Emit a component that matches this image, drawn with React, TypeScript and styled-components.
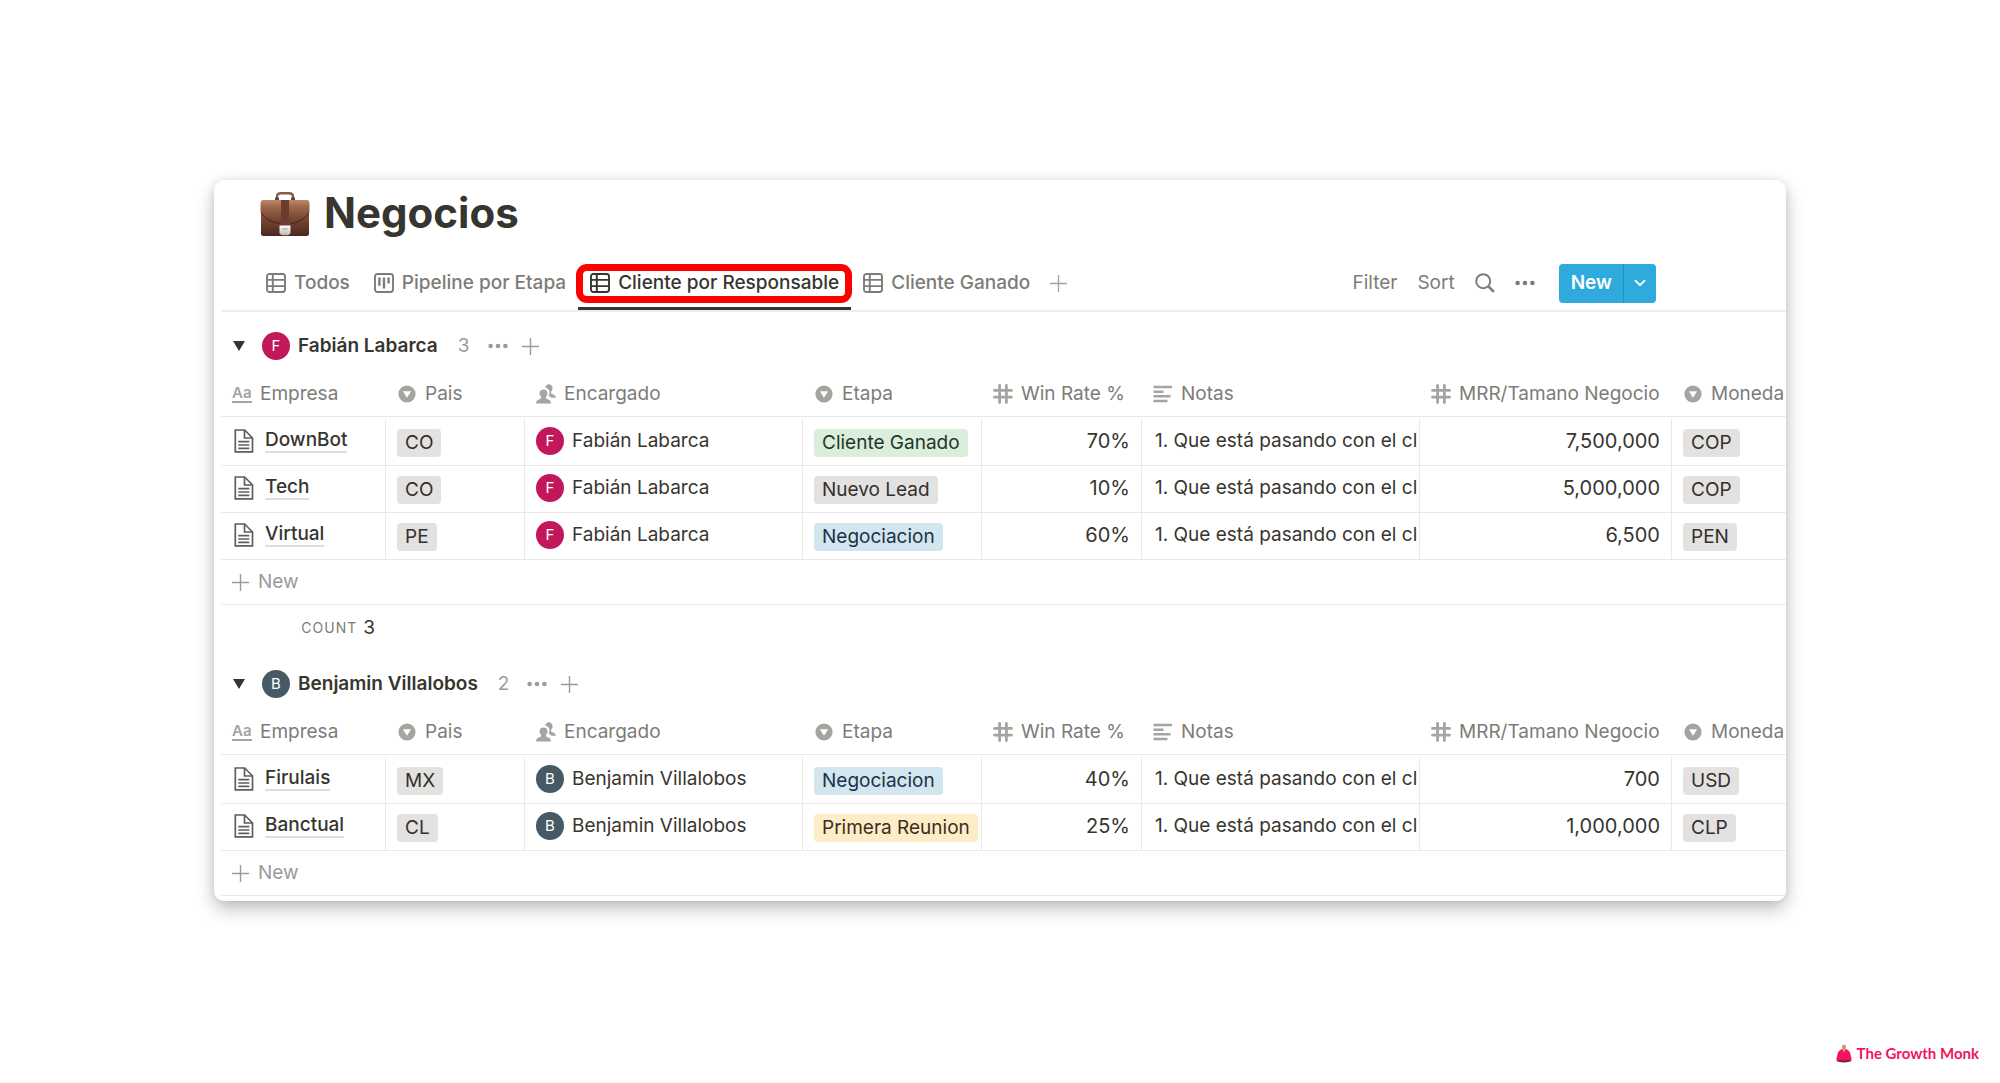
import React from "react";
import styled, { createGlobalStyle } from "styled-components";

const FIRST_COLUMN = 165;

const color = {
  ink: "#37352f",
  muted: "#7d7c78",
  faint: "#9b9a97",
  icon: "#a5a4a1",
  line: "#e9e9e7",
  blue: "#2eaadc",
};

const tones = {
  gray: { bg: "#e3e2e0", fg: "#32302c" },
  green: { bg: "#dbeddb", fg: "#1c3829" },
  blue: { bg: "#d3e5ef", fg: "#183347" },
  yellow: { bg: "#fdecc8", fg: "#402c1b" },
};
type Tone = keyof typeof tones;

const GlobalStyle = createGlobalStyle`
  *, *::before, *::after { box-sizing: border-box; }
  body {
    margin: 0;
    background: #fff;
    color: ${color.ink};
    font-family: Inter, "Liberation Sans", sans-serif;
    font-size: 19px;
    line-height: 24px;
  }
  button {
    font: inherit;
    color: inherit;
    background: none;
    border: 0;
    padding: 0;
    cursor: pointer;
  }
  svg { display: block; flex: none; }
`;

const Page = styled.div`
  min-height: 100vh;
  display: flex;
  flex-direction: column;
  padding: 180px 214px 0;
`;

const Card = styled.main`
  padding: 0 0 5px 7px;
  border-radius: 10px;
  background: #fff;
  overflow: hidden;
  box-shadow: 0 8px 18px rgba(0, 0, 0, 0.25), 0 0 8px rgba(0, 0, 0, 0.08);
`;

const TitleRow = styled.header`
  display: flex;
  align-items: center;
  gap: 14px;
  height: 68px;
  padding-left: 39px;
`;

const Title = styled.h1`
  margin: 0;
  padding-bottom: 2px;
  font-size: 42px;
  line-height: 52px;
  font-weight: 700;
`;

const Toolbar = styled.div`
  display: flex;
  justify-content: space-between;
  align-items: stretch;
  height: 64px;
  padding: 0 130px 0 33px;
  border-bottom: 2px solid #ededec;
`;

const Tabs = styled.nav`
  display: flex;
  align-items: stretch;
`;

const Tab = styled.button<{ $active?: boolean }>`
  position: relative;
  display: flex;
  align-items: center;
  gap: 8px;
  padding: 8px 12px 0;
  font-weight: 500;
  white-space: nowrap;
  color: ${(p) => (p.$active ? color.ink : color.muted)};
  box-shadow: ${(p) => (p.$active ? `inset 0 -3px 0 ${color.ink}` : "none")};
`;

const Highlight = styled.span`
  position: absolute;
  inset: 16px -1px 7px -2px;
  border: 7px solid #ff0000;
  border-radius: 11px;
`;

const Actions = styled.div`
  display: flex;
  align-items: center;
  padding-top: 8px;
  gap: 20px;
  color: ${color.muted};
`;

const IconButton = styled.button`
  display: flex;
  align-items: center;
  justify-content: center;
`;

const AddTab = styled(IconButton)`
  padding: 8px 8px 0;
  color: ${color.icon};
`;

const SplitButton = styled.div`
  display: flex;
  height: 39px;
  margin-left: 4px;
  border-radius: 4px;
  background: ${color.blue};
  color: #fff;
  overflow: hidden;
`;

const NewButton = styled.button`
  padding: 0 11px 0 12px;
  font-weight: 600;
  border-right: 1px solid #268fbb;
`;

const MoreNew = styled.button`
  display: flex;
  align-items: center;
  justify-content: center;
  width: 32px;
`;

const Group = styled.section`
  padding-top: 10px;
`;

const GroupHead = styled.div`
  display: flex;
  align-items: center;
  height: 48px;
  padding-left: 12px;
  color: ${color.faint};
`;

const GroupName = styled.h2`
  margin: 0 20px 0 8px;
  font-size: 19px;
  line-height: 24px;
  font-weight: 600;
  color: ${color.ink};
`;

const GroupTools = styled.div`
  display: flex;
  align-items: center;
  gap: 14px;
  padding-left: 18px;
`;

const Avatar = styled.span<{ $bg: string }>`
  display: flex;
  align-items: center;
  justify-content: center;
  flex: none;
  width: 28px;
  height: 28px;
  border-radius: 50%;
  background: ${(p) => p.$bg};
  color: #fff;
  font-size: 15px;
  line-height: 20px;
  font-weight: 400;
`;

const Toggle = styled(IconButton)`
  margin-right: 17px;
  color: ${color.ink};
`;

const Table = styled.table`
  width: 100%;
  table-layout: fixed;
  border-collapse: separate;
  border-spacing: 0;
`;

const Col = styled.col<{ $w?: number }>`
  width: ${(p) => (p.$w ? `${p.$w}px` : "auto")};
`;

const Th = styled.th`
  height: 47px;
  padding: 1px 0 0 11px;
  border-bottom: 1px solid ${color.line};
  font-weight: 400;
  text-align: left;
  color: ${color.muted};
  white-space: nowrap;
`;

const Td = styled.td<{ $num?: boolean; $flush?: boolean; $start?: number }>`
  height: 47px;
  padding: 0 ${(p) => (p.$flush ? 0 : 11)}px 2px ${(p) => p.$start ?? 11}px;
  border-bottom: 1px solid ${color.line};
  border-right: 1px solid ${color.line};
  font-size: ${(p) => (p.$num ? 20 : 19)}px;
  text-align: ${(p) => (p.$num ? "right" : "left")};
  white-space: nowrap;
  overflow: hidden;
  &:last-child {
    border-right: 0;
  }
`;

const Body = styled.tbody`
  &::before {
    content: "";
    display: block;
    height: 2px;
  }
`;

const Inline = styled.span<{ $gap: number }>`
  display: flex;
  align-items: center;
  gap: ${(p) => p.$gap}px;
`;

const HeadIcon = styled.span`
  display: flex;
  justify-content: center;
  width: 20px;
  color: ${color.icon};
`;

const TitleIcon = styled.span`
  width: 20px;
  border-bottom: 2px solid ${color.icon};
  font-size: 15px;
  line-height: 16px;
  font-weight: 600;
  color: ${color.icon};
`;

const PageLink = styled.a`
  border-bottom: 2px solid #dfdedc;
  font-weight: 500;
  line-height: 22px;
  color: ${color.ink};
  text-decoration: none;
`;

const Pill = styled.span<{ $tone: Tone }>`
  display: block;
  width: max-content;
  margin-top: 4px;
  padding: 2px 8px;
  border-radius: 4px;
  background: ${(p) => tones[p.$tone].bg};
  color: ${(p) => tones[p.$tone].fg};
`;

const NewRow = styled.button`
  display: flex;
  align-items: center;
  gap: 9px;
  width: 100%;
  height: 45px;
  padding-left: 11px;
  border-bottom: 1px solid ${color.line};
  color: ${color.faint};
`;

const Summary = styled.div`
  display: flex;
  justify-content: flex-end;
  align-items: center;
  gap: 6px;
  width: ${FIRST_COLUMN}px;
  height: 45px;
  padding-right: 11px;
`;

const SummaryLabel = styled.span`
  font-size: 14px;
  letter-spacing: 1px;
  text-transform: uppercase;
  color: ${color.muted};
`;

const Footer = styled.footer`
  display: flex;
  justify-content: flex-end;
  align-items: center;
  gap: 5px;
  margin: auto -193px 0 0;
  padding-bottom: 18px;
  font-family: Lato, "Open Sans", sans-serif;
  font-size: 15px;
  font-weight: 700;
  color: #f4135d;
`;

const TableIcon = () => (
  <svg width="20" height="20" viewBox="0 0 20 20" fill="none" stroke="currentColor" strokeWidth="1.9" aria-hidden="true">
    <rect x="1" y="1" width="18" height="18" rx="2.4" />
    <path d="M1 6.9h18M1 13.1h18M6.8 1v18" />
  </svg>
);

const BoardIcon = () => (
  <svg width="20" height="20" viewBox="0 0 20 20" fill="none" stroke="currentColor" aria-hidden="true">
    <rect x="1" y="1" width="18" height="18" rx="2.4" strokeWidth="1.9" />
    <path d="M5.4 4.5v8.3M10 4.5v11M14.6 4.5v6" strokeWidth="2.4" />
  </svg>
);

const PlusIcon = () => (
  <svg width="17" height="17" viewBox="0 0 17 17" stroke="currentColor" strokeWidth="1.4" aria-hidden="true">
    <path d="M8.5 0v17M0 8.5h17" />
  </svg>
);

const DotsIcon = () => (
  <svg width="20" height="6" viewBox="0 0 20 6" fill="currentColor" aria-hidden="true">
    <circle cx="2.6" cy="3" r="2.3" />
    <circle cx="10" cy="3" r="2.3" />
    <circle cx="17.4" cy="3" r="2.3" />
  </svg>
);

const SearchIcon = () => (
  <svg width="20" height="20" viewBox="0 0 20 20" fill="none" stroke="currentColor" aria-hidden="true">
    <circle cx="8.2" cy="8.2" r="7" strokeWidth="2" />
    <path d="M13.2 13.2l5.6 5.6" strokeWidth="2.6" />
  </svg>
);

const ChevronIcon = () => (
  <svg width="12" height="8" viewBox="0 0 12 8" fill="none" stroke="currentColor" strokeWidth="1.9" aria-hidden="true">
    <path d="M1 1.2l5 5 5-5" />
  </svg>
);

const TriangleIcon = () => (
  <svg width="12" height="10" viewBox="0 0 12 10" fill="currentColor" aria-hidden="true">
    <path d="M0 0h12L6 10z" />
  </svg>
);

const SelectIcon = () => (
  <svg width="18" height="18" viewBox="0 0 18 18" aria-hidden="true">
    <circle cx="9" cy="9" r="8.6" fill="currentColor" />
    <path d="M4.9 6.2h8.2L9 12.8z" fill="#fff" />
  </svg>
);

const PersonIcon = () => (
  <svg width="20" height="20" viewBox="0 0 20 20" fill="currentColor" aria-hidden="true">
    <path d="M12.6.3c2.300 0 4 1.700 4 4 0 1.400-.6 2.600-1.600 3.500v1c0 .7.600 1.100 1.600 1.500 1.900.7 3 1.500 3.400 3.400h-4.600c-.7-.9-1.700-1.500-3-2 .8-1 1.200-2.200 1.200-3.400 0-2.300-1.500-4.100-4.300-4.600C9.700 1.700 11 .3 12.600.3z" />
    <path d="M7.500 5.400c2.300 0 4 1.700 4 3.900 0 1.400-.6 2.700-1.600 3.500v1c0 .7.500 1 1.600 1.400 2 .7 3.300 1.500 3.500 4.300H0c.2-2.800 1.500-3.600 3.500-4.300 1.100-.4 1.600-.7 1.600-1.400v-1c-1-.8-1.600-2.100-1.600-3.500 0-2.200 1.700-3.900 4-3.900z" />
  </svg>
);

const HashIcon = () => (
  <svg width="20" height="20" viewBox="0 0 20 20" stroke="currentColor" strokeWidth="2.8" strokeLinecap="round" aria-hidden="true">
    <path d="M6.6 1.500v17M13.400 1.500v17M1.500 6.400h17M1.500 13.200h17" />
  </svg>
);

const TextIcon = () => (
  <svg width="20" height="18" viewBox="0 0 20 18" stroke="currentColor" strokeWidth="2.6" aria-hidden="true">
    <path d="M.5 2h18.500M.5 6.700h10M.5 11.300h17M.5 16h14" />
  </svg>
);

const DocIcon = () => (
  <svg width="20" height="24" viewBox="0 0 20 24" fill="none" stroke="#5f5e5a" strokeWidth="1.700" aria-hidden="true">
    <path d="M1.300 1h9.400L18.500 9v13.800H1.300z" />
    <path d="M10.500 1v8h8M4.300 12.600h11M4.300 16h11M4.300 19.300h11" />
  </svg>
);

const BriefcaseIcon = () => (
  <svg width="50" height="46" viewBox="0 0 50 46" role="img" aria-label="Briefcase">
    <defs>
      <linearGradient id="caseBody" x1="0" y1="0" x2="0" y2="1">
        <stop offset="0" stopColor="#a87457" />
        <stop offset="0.5" stopColor="#7a4836" />
        <stop offset="1" stopColor="#4c271e" />
      </linearGradient>
      <linearGradient id="caseFlap" x1="0" y1="0" x2="0" y2="1">
        <stop offset="0" stopColor="#c08a68" />
        <stop offset="0.25" stopColor="#a06a4e" />
        <stop offset="1" stopColor="#6a3a2b" />
      </linearGradient>
      <linearGradient id="caseLock" x1="0" y1="0" x2="0" y2="1">
        <stop offset="0" stopColor="#ffffff" />
        <stop offset="1" stopColor="#b9b7b5" />
      </linearGradient>
    </defs>
    <path d="M17 9V5.500C17 3.200 18.500 2.200 21 2.200h8c2.500 0 4 1 4 3.300V9" fill="none" stroke="#8b5a46" strokeWidth="2.4" />
    <path d="M15 6.500h4V9h-4zM31 6.500h4V9h-4z" fill="#5a4a44" />
    <rect x="1" y="9" width="48" height="36" rx="2.5" fill="url(#caseBody)" />
    <path d="M4 9h42c2.500 0 3.500 1.500 3.500 4v7C45 28 37 32.500 25 32.500S5 28 .5 20v-7c0-2.500 1-4 3.500-4z" fill="url(#caseFlap)" />
    <path d="M1 21.500C6 29 14 33 25 33s19-4 24-11.500" fill="none" stroke="#43231b" strokeWidth="1" />
    <path d="M21 9h8v19h-8z" fill="#6b3b2b" />
    <path d="M19.500 35v-4c0-2.500 2.500-4 5.500-4s5.500 1.500 5.500 4v4z" fill="#6f3e30" />
    <path d="M19.500 34.500h11v7c0 2-2 2.800-5.500 2.800s-5.500-.8-5.500-2.800z" fill="url(#caseLock)" />
    <path d="M22.500 38h5" stroke="#9a9896" strokeWidth="1" />
  </svg>
);

const MonkIcon = () => (
  <svg width="16" height="19" viewBox="0 0 16 19" aria-hidden="true">
    <ellipse cx="8" cy="16.600" rx="7.500" ry="1.800" fill="#7d1f35" />
    <path d="M5 5.500c1.500-1 4.500-1 6 0 2.800 1.300 3.700 4.500 4 7.500.8 1.200.9 2.500 0 3.200H1c-.9-.7-.8-2 0-3.200.3-3 1.200-6.200 4-7.500z" fill="#f4135d" />
    <path d="M6.300 5h3.400L8 8.500z" fill="#e0a88c" />
    <ellipse cx="8" cy="3" rx="2" ry="2.500" fill="#cf9478" />
  </svg>
);

const columns = [
  { name: "Empresa", width: FIRST_COLUMN, icon: null },
  { name: "Pais", width: 139, icon: <SelectIcon /> },
  { name: "Encargado", width: 278, icon: <PersonIcon /> },
  { name: "Etapa", width: 179, icon: <SelectIcon /> },
  { name: "Win Rate %", width: 160, icon: <HashIcon /> },
  { name: "Notas", width: 278, icon: <TextIcon /> },
  { name: "MRR/Tamano Negocio", width: 252, icon: <HashIcon /> },
  { name: "Moneda", width: undefined, icon: <SelectIcon /> },
];

type Deal = {
  company: string;
  country: string;
  stage: string;
  tone: Tone;
  rate: string;
  mrr: string;
  currency: string;
};

type Owner = { name: string; initial: string; bg: string; deals: Deal[]; count?: number };

const NOTE = "1. Que está pasando con el cl";

const owners: Owner[] = [
  {
    name: "Fabián Labarca",
    initial: "F",
    bg: "#c2185b",
    count: 3,
    deals: [
      { company: "DownBot", country: "CO", stage: "Cliente Ganado", tone: "green", rate: "70%", mrr: "7,500,000", currency: "COP" },
      { company: "Tech", country: "CO", stage: "Nuevo Lead", tone: "gray", rate: "10%", mrr: "5,000,000", currency: "COP" },
      { company: "Virtual", country: "PE", stage: "Negociacion", tone: "blue", rate: "60%", mrr: "6,500", currency: "PEN" },
    ],
  },
  {
    name: "Benjamin Villalobos",
    initial: "B",
    bg: "#455a64",
    deals: [
      { company: "Firulais", country: "MX", stage: "Negociacion", tone: "blue", rate: "40%", mrr: "700", currency: "USD" },
      { company: "Banctual", country: "CL", stage: "Primera Reunion", tone: "yellow", rate: "25%", mrr: "1,000,000", currency: "CLP" },
    ],
  },
];

const OwnerGroup = ({ owner }: { owner: Owner }) => (
  <Group>
    <GroupHead>
      <Toggle aria-label={`Toggle ${owner.name}`}>
        <TriangleIcon />
      </Toggle>
      <Avatar $bg={owner.bg}>{owner.initial}</Avatar>
      <GroupName>{owner.name}</GroupName>
      <span>{owner.deals.length}</span>
      <GroupTools>
        <IconButton aria-label="Group options">
          <DotsIcon />
        </IconButton>
        <IconButton aria-label="Add to group">
          <PlusIcon />
        </IconButton>
      </GroupTools>
    </GroupHead>
    <Table>
      <colgroup>
        {columns.map((c) => (
          <Col key={c.name} $w={c.width} />
        ))}
      </colgroup>
      <thead>
        <tr>
          {columns.map((c) => (
            <Th key={c.name} scope="col">
              <Inline $gap={8}>
                {c.icon ? <HeadIcon>{c.icon}</HeadIcon> : <TitleIcon aria-hidden="true">Aa</TitleIcon>}
                {c.name}
              </Inline>
            </Th>
          ))}
        </tr>
      </thead>
      <Body>
        {owner.deals.map((d) => (
          <tr key={d.company}>
            <Td $start={13}>
              <Inline $gap={11}>
                <DocIcon />
                <PageLink href="#">{d.company}</PageLink>
              </Inline>
            </Td>
            <Td>
              <Pill $tone="gray">{d.country}</Pill>
            </Td>
            <Td>
              <Inline $gap={8}>
                <Avatar $bg={owner.bg}>{owner.initial}</Avatar>
                {owner.name}
              </Inline>
            </Td>
            <Td $flush>
              <Pill $tone={d.tone}>{d.stage}</Pill>
            </Td>
            <Td $num>{d.rate}</Td>
            <Td $flush $start={13}>
              {NOTE}
            </Td>
            <Td $num>{d.mrr}</Td>
            <Td>
              <Pill $tone="gray">{d.currency}</Pill>
            </Td>
          </tr>
        ))}
      </Body>
    </Table>
    <NewRow>
      <PlusIcon />
      New
    </NewRow>
    {owner.count !== undefined && (
      <Summary>
        <SummaryLabel>Count</SummaryLabel>
        <span>{owner.count}</span>
      </Summary>
    )}
  </Group>
);

export default function App() {
  return (
    <Page>
      <GlobalStyle />
      <Card>
        <TitleRow>
          <BriefcaseIcon />
          <Title>Negocios</Title>
        </TitleRow>
        <Toolbar>
          <Tabs>
            <Tab>
              <TableIcon />
              Todos
            </Tab>
            <Tab>
              <BoardIcon />
              Pipeline por Etapa
            </Tab>
            <Tab $active>
              <TableIcon />
              Cliente por Responsable
              <Highlight />
            </Tab>
            <Tab>
              <TableIcon />
              Cliente Ganado
            </Tab>
            <AddTab aria-label="Add view">
              <PlusIcon />
            </AddTab>
          </Tabs>
          <Actions>
            <button>Filter</button>
            <button>Sort</button>
            <IconButton aria-label="Search">
              <SearchIcon />
            </IconButton>
            <IconButton aria-label="More">
              <DotsIcon />
            </IconButton>
            <SplitButton>
              <NewButton>New</NewButton>
              <MoreNew aria-label="More ways to add">
                <ChevronIcon />
              </MoreNew>
            </SplitButton>
          </Actions>
        </Toolbar>
        {owners.map((o) => (
          <OwnerGroup key={o.name} owner={o} />
        ))}
      </Card>
      <Footer>
        <MonkIcon />
        The Growth Monk
      </Footer>
    </Page>
  );
}
